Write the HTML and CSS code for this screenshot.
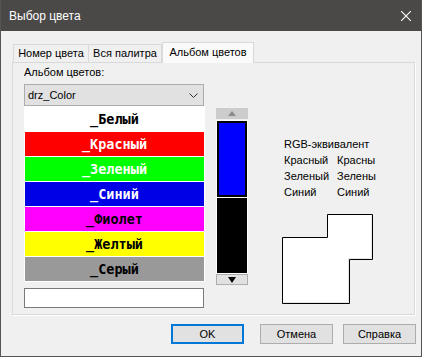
FILE: index.html
```html
<!DOCTYPE html>
<html lang="ru">
<head>
    <meta charset="UTF-8">
    <title>Выбор цвета</title>
    <link rel="stylesheet" href="styles.css">
</head>
<body>
    <div class="window">
        <div class="titlebar">
            <span class="title">Выбор цвета</span>
            <svg class="close" width="10" height="10" viewBox="0 0 10 10">
                <path d="M0 0 L10 10 M10 0 L0 10" stroke="#fff" stroke-width="1.1" />
            </svg>
        </div>

        <div class="tabs">
            <div class="tab tab-num">Номер цвета</div>
            <div class="tab tab-all">Вся палитра</div>
            <div class="tab tab-album active">Альбом цветов</div>
        </div>

        <div class="panel">
            <div class="left-col">
                <div class="label">Альбом цветов:</div>
                <div class="select">
                    <span>drz_Color</span>
                    <svg width="9" height="5" viewBox="0 0 9 5">
                        <path d="M0.5 0.5 L4.5 4.5 L8.5 0.5" fill="none" stroke="#333" stroke-width="1" />
                    </svg>
                </div>
                <div class="color-list">
                    <div class="color-row row-white">_Белый</div>
                    <div class="color-row row-red">_Красный</div>
                    <div class="color-row row-green">_Зеленый</div>
                    <div class="color-row row-blue">_Синий</div>
                    <div class="color-row row-magenta">_Фиолет</div>
                    <div class="color-row row-yellow">_Желтый</div>
                    <div class="color-row row-gray">_Серый</div>
                </div>
                <div class="name-box"></div>
            </div>

            <div class="scroll-col">
                <div class="scroll-btn up"><span class="tri-up"></span></div>
                <div class="swatches">
                    <div class="swatch swatch-blue selected"></div>
                    <div class="swatch swatch-black"></div>
                </div>
                <div class="scroll-btn down"><span class="tri-down"></span></div>
            </div>

            <div class="rgb-col">
                <div class="rgb-grid">
                    <div class="rgb-head">RGB-эквивалент</div>
                    <div>Красный</div><div>Красны</div>
                    <div>Зеленый</div><div>Зелены</div>
                    <div>Синий</div><div>Синий</div>
                </div>
                <svg class="shape" width="92" height="91" viewBox="0 0 92 91">
                    <polygon points="45.5,0.5 90.5,0.5 90.5,45.5 67.5,45.5 67.5,89.5 0.5,89.5 0.5,23.5 45.5,23.5"
                             fill="#fff" stroke="#000" stroke-width="1" />
                    <polyline points="1.5,88.5 66.5,88.5 66.5,44.5 89.5,44.5 89.5,1.5"
                              fill="none" stroke="#e6e6e6" stroke-width="1" />
                </svg>
            </div>
        </div>

        <div class="buttons">
            <button class="btn btn-ok">OK</button>
            <button class="btn btn-cancel">Отмена</button>
            <button class="btn">Справка</button>
        </div>
    </div>
</body>
</html>
```

FILE: styles.css
```css
* {
    box-sizing: border-box;
}
body {
    margin: 0;
    background-color: #f0f0f0;
    font-family: 'Liberation Sans', Arial, sans-serif;
    font-size: 11px;
    color: #000;
}
.window {
    width: 422px;
    height: 357px;
    border: 1px solid #575553;
    border-top: none;
    background-color: #f0f0f0;
}
.titlebar {
    height: 31px;
    background-color: #4b4947;
    color: #fff;
    display: flex;
    align-items: center;
    justify-content: space-between;
    padding: 0 10px 0 8px;
}
.title {
    font-size: 12px;
}

/* вкладки */
.tabs {
    display: flex;
    align-items: flex-end;
    height: 20px;
    margin: 11px 0 0 12px;
}
.tab {
    height: 18px;
    line-height: 17px;
    text-align: center;
    border: 1px solid #d9d9d9;
    border-bottom: none;
    background-color: #f0f0f0;
}
.tab + .tab {
    border-left: none;
}
.tab-num {
    width: 76px;
}
.tab-all {
    width: 73px;
}
.tab-album {
    width: 92px;
}
.tab.active {
    height: 21px;
    line-height: 19px;
    background-color: #fafafa;
    border-left: 1px solid #d9d9d9;
    margin-bottom: -1px;
    position: relative;
    z-index: 1;
}

.panel {
    display: flex;
    width: 403px;
    height: 253px;
    margin-left: 11px;
    border: 1px solid #d9d9d9;
    box-shadow: 1px 1px 0 #fff;
    padding-left: 11px;
}

/* левая колонка */
.left-col {
    width: 181px;
    padding-top: 2px;
}
.label {
    line-height: 15px;
}
.select {
    margin-top: 4px;
    height: 22px;
    width: 180px;
    border: 1px solid #adadad;
    background-color: #e1e1e1;
    display: flex;
    align-items: center;
    justify-content: space-between;
    padding: 0 5px 0 3px;
}
.color-list {
    background-color: #fff;
    padding: 1px;
    display: flex;
    flex-direction: column;
    gap: 1px;
}
.color-row {
    height: 24px;
    line-height: 24px;
    text-align: center;
    font-family: 'DejaVu Sans Mono', monospace;
    font-weight: bold;
    font-size: 13.5px;
}
.row-white { background-color: #fff; color: #000; }
.row-red { background-color: #ff0000; color: #fff; }
.row-green { background-color: #00ff00; color: #fff; }
.row-blue { background-color: #0000e6; color: #fff; }
.row-magenta { background-color: #ff00ff; color: #000; }
.row-yellow { background-color: #ffff00; color: #000; }
.row-gray { background-color: #999999; color: #000; }
.name-box {
    margin-top: 6px;
    width: 180px;
    height: 20px;
    border: 1px solid #7a7a7a;
    background-color: #fff;
}

/* полоса с образцами */
.scroll-col {
    width: 32px;
    margin-left: 11px;
    padding-top: 45px;
}
.scroll-btn {
    height: 11px;
    display: flex;
    align-items: center;
    justify-content: center;
}
.scroll-btn.up {
    background-color: #cccccc;
}
.scroll-btn.down {
    background-color: #e1e1e1;
    border: 1px solid #adadad;
}
.tri-up {
    width: 0;
    height: 0;
    border-left: 4px solid transparent;
    border-right: 4px solid transparent;
    border-bottom: 5px solid #8c8c8c;
}
.tri-down {
    width: 0;
    height: 0;
    border-left: 4px solid transparent;
    border-right: 4px solid transparent;
    border-top: 6px solid #000;
}
.swatches {
    margin-top: 1px;
    background-color: #fff;
    padding: 1px;
    display: flex;
    flex-direction: column;
    gap: 1px;
}
.swatch {
    height: 75px;
}
.swatch-blue {
    background-color: #0000ff;
    height: 76px;
}
.swatch-black {
    background-color: #000;
}
.swatch.selected {
    border: 2px solid #000;
}

/* RGB */
.rgb-col {
    margin-left: 36px;
    padding-top: 73px;
}
.rgb-grid {
    display: grid;
    grid-template-columns: 53px auto;
    line-height: 16px;
}
.rgb-head {
    grid-column: 1 / 3;
}
.shape {
    display: block;
    margin: 14px 0 0 -2px;
}

/* кнопки */
.buttons {
    display: flex;
    justify-content: flex-end;
    margin-top: 9px;
    padding-right: 5px;
}
.btn {
    width: 73px;
    height: 20px;
    border: 1px solid #adadad;
    background-color: #e1e1e1;
    font-family: 'Liberation Sans', Arial, sans-serif;
    font-size: 11px;
    color: #000;
    padding: 0;
}
.btn-ok {
    border: 2px solid #0078d7;
    margin-right: 16px;
}
.btn-cancel {
    margin-right: 10px;
}
```
